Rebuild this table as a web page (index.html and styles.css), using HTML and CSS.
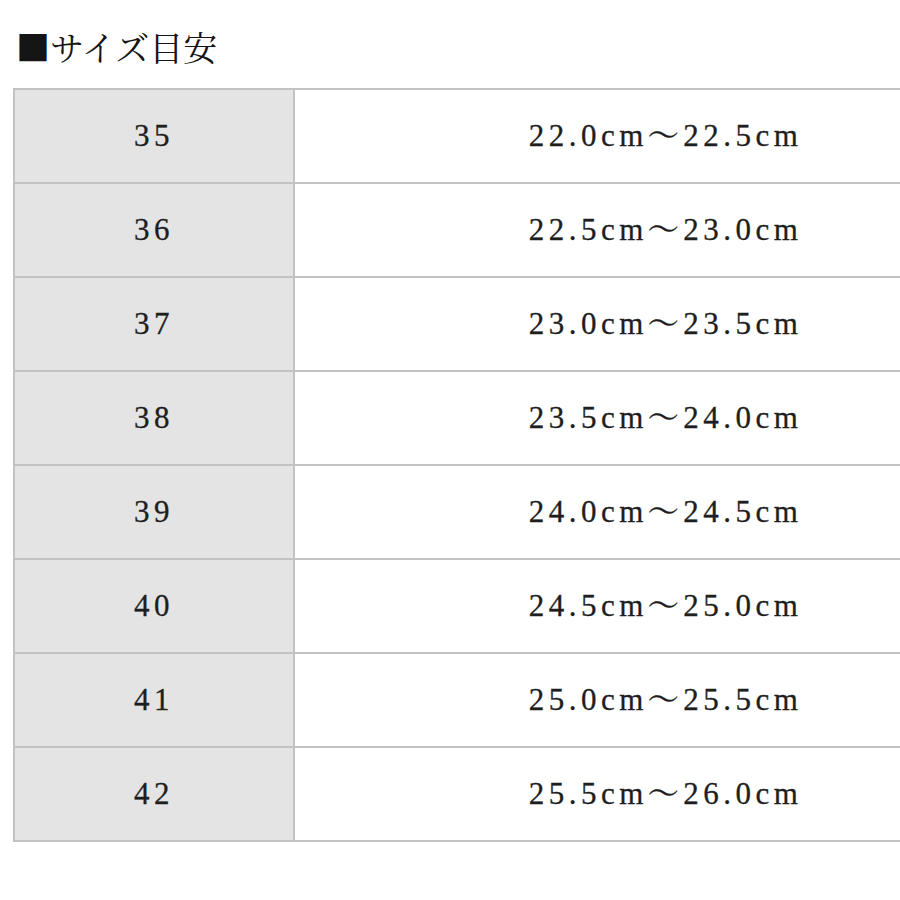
FILE: index.html
```html
<!DOCTYPE html>
<html lang="ja">
<head>
<meta charset="utf-8">
<title>サイズ目安</title>
<link rel="stylesheet" href="styles.css">
</head>
<body>
<div class="page">
  <h1 class="title">■サイズ目安</h1>
  <div class="clip">
    <table class="size-table">
      <tbody>
        <tr><td class="eu">35</td><td class="cm">22.0cm〜22.5cm</td></tr>
        <tr><td class="eu">36</td><td class="cm">22.5cm〜23.0cm</td></tr>
        <tr><td class="eu">37</td><td class="cm">23.0cm〜23.5cm</td></tr>
        <tr><td class="eu">38</td><td class="cm">23.5cm〜24.0cm</td></tr>
        <tr><td class="eu">39</td><td class="cm">24.0cm〜24.5cm</td></tr>
        <tr><td class="eu">40</td><td class="cm">24.5cm〜25.0cm</td></tr>
        <tr><td class="eu">41</td><td class="cm">25.0cm〜25.5cm</td></tr>
        <tr><td class="eu">42</td><td class="cm">25.5cm〜26.0cm</td></tr>
      </tbody>
    </table>
  </div>
</div>
</body>
</html>
```

FILE: styles.css
```css
html, body {
  margin: 0;
  padding: 0;
  background: #ffffff;
  overflow: hidden;
}

.page {
  padding: 24px 0 0 13px;
  font-family: "Liberation Serif", "Noto Serif CJK JP", "Noto Sans CJK JP", serif;
  color: #1e1e1e;
}

.title {
  margin: 0 0 18px 3px;
  font-family: "Noto Serif CJK JP", "Noto Sans CJK JP", serif;
  font-weight: normal;
  font-size: 34px;
  line-height: 46px;
  color: #151515;
}

.clip {
  overflow: hidden;
}

.size-table {
  border-collapse: collapse;
  width: 1025px;
}

.size-table td {
  border: 2px solid #c2c2c2;
  height: 92px;
  padding: 0;
  text-align: center;
  vertical-align: middle;
  font-size: 31px;
  line-height: 36px;
  letter-spacing: 4.5px;
  -webkit-text-stroke: 0.3px #1e1e1e;
}

.size-table .eu {
  width: 278px;
  background: #e4e4e4;
}

.size-table .cm {
  background: #ffffff;
}
```
